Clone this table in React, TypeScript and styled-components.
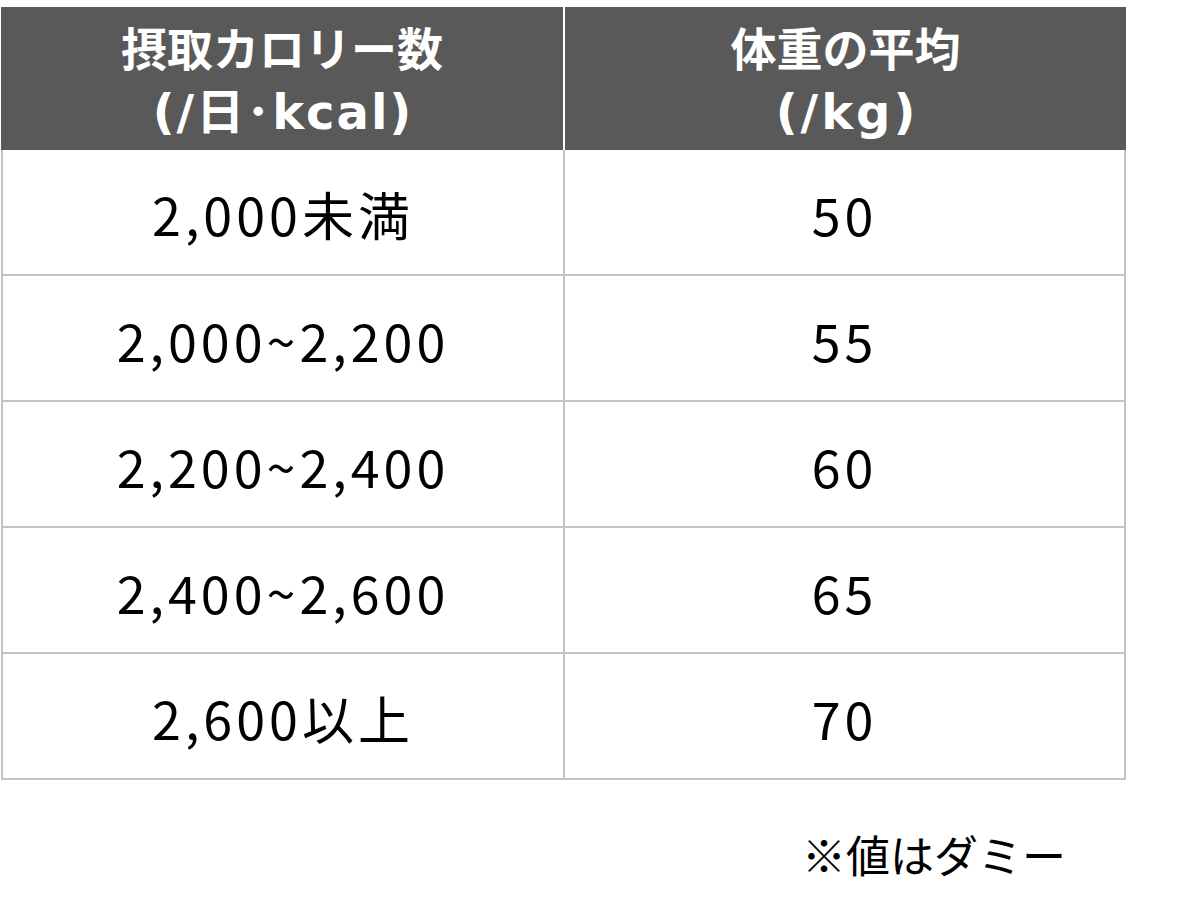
import type { FC, ReactElement } from "react";
import { Fragment } from "react";
import styled, { createGlobalStyle } from "styled-components";

const GlobalStyle = createGlobalStyle`
  html, body {
    margin: 0;
    padding: 0;
    background: #ffffff;
  }
  body {
    font-family: "Noto Sans CJK JP", "Noto Sans", sans-serif;
  }
`;

const Page = styled.div`
  width: 1200px;
  height: 913px;
  padding: 7px 0 0 1px;
  box-sizing: border-box;
`;

const Table = styled.div`
  width: 1125px;
  display: grid;
  grid-template-columns: 562px 563px;
`;

const HeadCell = styled.div<{ $last?: boolean }>`
  height: 143px;
  background: #595959;
  color: #ffffff;
  font-weight: 700;
  font-size: 46px;
  line-height: 62px;
  display: flex;
  flex-direction: column;
  align-items: center;
  justify-content: center;
  border-left: ${({ $last }) => ($last ? "2px solid #ffffff" : "none")};
  box-sizing: border-box;
`;

const Unit = styled.span<{ $spacing: number }>`
  font-family: "DejaVu Sans", "Noto Sans CJK JP", sans-serif;
  font-size: 48px;
  padding-top: 4px;
  letter-spacing: ${({ $spacing }) => $spacing}px;
  margin-right: ${({ $spacing }) => -$spacing}px;
`;

const Cell = styled.div<{ $last?: boolean }>`
  height: 126px;
  display: flex;
  align-items: center;
  justify-content: center;
  font-size: 52px;
  letter-spacing: 4px;
  color: #000000;
  border-bottom: 2px solid #c4c4c4;
  border-left: 2px solid #c4c4c4;
  border-right: ${({ $last }) => ($last ? "2px solid #c4c4c4" : "none")};
  box-sizing: border-box;
  padding-top: 2px;
`;

const Note = styled.div`
  display: flex;
  justify-content: flex-end;
  padding: 42px 134px 0 0;
  font-size: 44px;
  color: #000000;
`;

const rows: [string, string][] = [
    ["2,000未満", "50"],
    ["2,000~2,200", "55"],
    ["2,200~2,400", "60"],
    ["2,400~2,600", "65"],
    ["2,600以上", "70"],
];

const App: FC = (): ReactElement => {
    return (
        <Page>
            <GlobalStyle />
            <Table>
                <HeadCell>
                    <span>摂取カロリー数</span>
                    <Unit $spacing={2}>(/日･kcal)</Unit>
                </HeadCell>
                <HeadCell $last>
                    <span>体重の平均</span>
                    <Unit $spacing={3}>(/kg)</Unit>
                </HeadCell>
                { rows.map(([kcal, kg]) => (
                    <Fragment key={kcal}>
                        <Cell>{ kcal }</Cell>
                        <Cell $last>{ kg }</Cell>
                    </Fragment>
                )) }
            </Table>
            <Note>※値はダミー</Note>
        </Page>
    );
}

export default App;
